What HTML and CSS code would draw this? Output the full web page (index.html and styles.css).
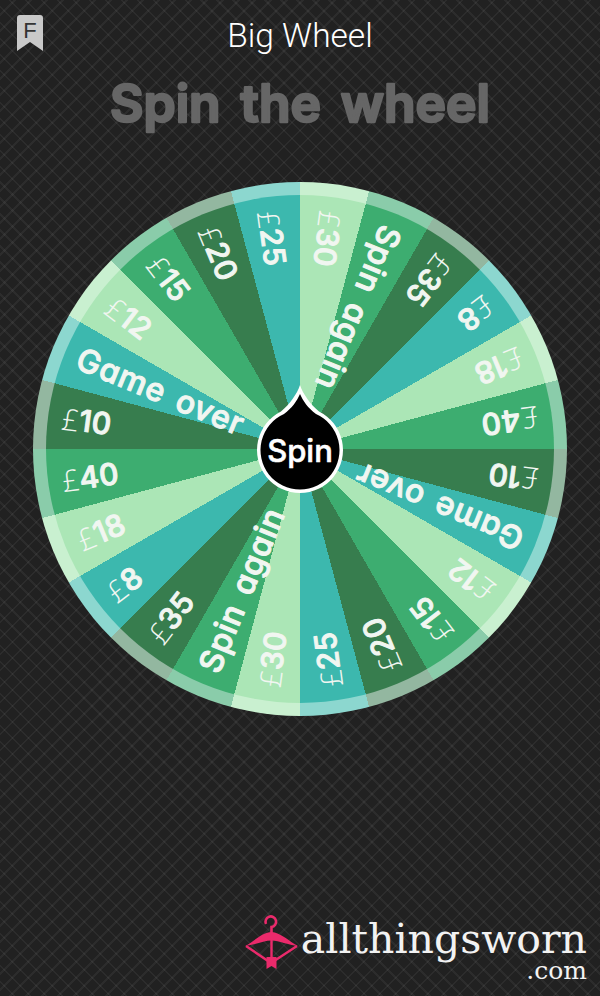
FILE: index.html
```html
<!DOCTYPE html>
<html lang="en">
<head>
    <meta charset="UTF-8">
    <meta name="viewport" content="width=device-width, initial-scale=1.0">
    <title>Big Wheel</title>
    <link rel="stylesheet" href="styles.css">
</head>
<body>
    <div class="page">
        <header class="topbar">
            <svg class="bookmark" viewBox="0 0 26 36" width="26" height="36">
                <path class="bookmark-shape" d="M3 0H23Q26 0 26 3V36L13 27L0 36V3Q0 0 3 0Z"/>
                <text class="bookmark-letter" x="13" y="23">F</text>
            </svg>
            <h1 class="title">Big Wheel</h1>
        </header>
        <h2 class="headline">
            <svg class="headline-svg" viewBox="0 0 600 80" width="600" height="80">
                <text x="300" y="50">Spin the wheel</text>
            </svg>
        </h2>

        <div class="wheel">
            <div class="wheel-face"></div>
            <svg class="wheel-labels" viewBox="-267 -267 534 534">
                <text transform="rotate(97.5) translate(-240 0)"><tspan class="pound">£</tspan>30</text>
                <text class="word" transform="rotate(112.5) translate(-240 0)">Spin again</text>
                <text transform="rotate(127.5) translate(-240 0)"><tspan class="pound">£</tspan>35</text>
                <text transform="rotate(142.5) translate(-240 0)"><tspan class="pound">£</tspan>8</text>
                <text transform="rotate(157.5) translate(-240 0)"><tspan class="pound">£</tspan>18</text>
                <text transform="rotate(172.5) translate(-240 0)"><tspan class="pound">£</tspan>40</text>
                <text transform="rotate(187.5) translate(-240 0)"><tspan class="pound">£</tspan>10</text>
                <text class="word" transform="rotate(202.5) translate(-240 0)">Game over</text>
                <text transform="rotate(217.5) translate(-240 0)"><tspan class="pound">£</tspan>12</text>
                <text transform="rotate(232.5) translate(-240 0)"><tspan class="pound">£</tspan>15</text>
                <text transform="rotate(247.5) translate(-240 0)"><tspan class="pound">£</tspan>20</text>
                <text transform="rotate(262.5) translate(-240 0)"><tspan class="pound">£</tspan>25</text>
                <text transform="rotate(277.5) translate(-240 0)"><tspan class="pound">£</tspan>30</text>
                <text class="word" transform="rotate(292.5) translate(-240 0)">Spin again</text>
                <text transform="rotate(307.5) translate(-240 0)"><tspan class="pound">£</tspan>35</text>
                <text transform="rotate(322.5) translate(-240 0)"><tspan class="pound">£</tspan>8</text>
                <text transform="rotate(337.5) translate(-240 0)"><tspan class="pound">£</tspan>18</text>
                <text transform="rotate(352.5) translate(-240 0)"><tspan class="pound">£</tspan>40</text>
                <text transform="rotate(7.5) translate(-240 0)"><tspan class="pound">£</tspan>10</text>
                <text class="word" transform="rotate(22.5) translate(-240 0)">Game over</text>
                <text transform="rotate(37.5) translate(-240 0)"><tspan class="pound">£</tspan>12</text>
                <text transform="rotate(52.5) translate(-240 0)"><tspan class="pound">£</tspan>15</text>
                <text transform="rotate(67.5) translate(-240 0)"><tspan class="pound">£</tspan>20</text>
                <text transform="rotate(82.5) translate(-240 0)"><tspan class="pound">£</tspan>25</text>

                <!-- spin button -->
                <g transform="translate(0 1)">
                    <path class="hub-edge" d="M0 -65C3 -56 10 -46 19 -38.500A43 43 0 1 1 -19 -38.500C-10 -46 -3 -56 0 -65Z"/>
                    <path class="hub" d="M0 -56C3 -49 8 -42 16 -36A39.500 39.500 0 1 1 -16 -36C-8 -42 -3 -49 0 -56Z"/>
                    <text class="hub-text" x="0" y="0">Spin</text>
                </g>
            </svg>
        </div>

        <footer class="logo">
            <svg class="logo-mark" viewBox="0 0 54 58" width="54" height="58">
                <path class="logo-line" d="M21 11A5.300 5.300 0 1 1 26.500 14V21"/>
                <path class="logo-bow" d="M0 33C8 29 18 19 26.500 19C35 19 45 29 53 33C43 32 34 27.500 26.500 27.500C19 27.500 10 32 0 33Z"/>
                <path class="logo-line thin" d="M1 33L26 50L52 33M26.500 25V50"/>
                <path class="logo-bow" d="M21.500 44L31.500 44L31.500 56L26.500 53L21.500 56Z"/>
            </svg>
            <div class="logo-text">
                <div class="logo-name">allthingsworn</div>
                <div class="logo-tld">.com</div>
            </div>
        </footer>
    </div>
</body>
</html>
```

FILE: styles.css
```css
* {
    box-sizing: border-box;
}

body {
    margin: 0;
    background-color: #212121;
    background-image:
        repeating-linear-gradient(45deg, transparent 0, transparent 9.5px, rgba(255,255,255,0.05) 9.5px, rgba(255,255,255,0.05) 11.3px),
        repeating-linear-gradient(-45deg, transparent 0, transparent 9.5px, rgba(255,255,255,0.05) 9.5px, rgba(255,255,255,0.05) 11.3px);
}

.page {
    width: 600px;
    height: 996px;
    display: flex;
    flex-direction: column;
    overflow: hidden;
}

.topbar {
    position: relative;
    height: 72px;
    padding-top: 16px;
    text-align: center;
}

/* sits over the corner of the bar, title stays centred */
.bookmark {
    position: absolute;
    top: 15px;
    left: 17px;
}

.bookmark-shape {
    fill: #c9c9c9;
}

.bookmark-letter {
    font-family: "Liberation Sans", sans-serif;
    font-size: 22px;
    fill: #333;
    text-anchor: middle;
}

.title {
    margin: 0;
    font-family: Roboto, sans-serif;
    font-size: 33.500px;
    font-weight: 300;
    line-height: 40px;
    color: #fff;
}

.headline {
    margin: 0;
    height: 110px;
}

.headline-svg {
    display: block;
}

.headline-svg text {
    font-family: Inter, sans-serif;
    font-feature-settings: "cv11";
    font-size: 51.500px;
    font-weight: 600;
    word-spacing: 7px;
    text-anchor: middle;
    fill: #666;
    stroke: #666;
    stroke-width: 2.500px;
    stroke-linejoin: round;
}

.wheel {
    position: relative;
    width: 534px;
    height: 534px;
    margin: 0 auto;
    padding: 13px;
    border-radius: 50%;
    background: conic-gradient(
        #c9f0d0 0 15deg, #8accaa 15deg 30deg, #93b7a0 30deg 45deg, #8cd7cf 45deg 60deg,
        #c9f0d0 60deg 75deg, #8accaa 75deg 90deg, #93b7a0 90deg 105deg, #8cd7cf 105deg 120deg,
        #c9f0d0 120deg 135deg, #8accaa 135deg 150deg, #93b7a0 150deg 165deg, #8cd7cf 165deg 180deg,
        #c9f0d0 180deg 195deg, #8accaa 195deg 210deg, #93b7a0 210deg 225deg, #8cd7cf 225deg 240deg,
        #c9f0d0 240deg 255deg, #8accaa 255deg 270deg, #93b7a0 270deg 285deg, #8cd7cf 285deg 300deg,
        #c9f0d0 300deg 315deg, #8accaa 315deg 330deg, #93b7a0 330deg 345deg, #8cd7cf 345deg 360deg);
}

.wheel-face {
    width: 100%;
    height: 100%;
    border-radius: 50%;
    background: conic-gradient(
        #abe6b6 0 15deg, #3dad70 15deg 30deg, #377d4e 30deg 45deg, #3cb8ae 45deg 60deg,
        #abe6b6 60deg 75deg, #3dad70 75deg 90deg, #377d4e 90deg 105deg, #3cb8ae 105deg 120deg,
        #abe6b6 120deg 135deg, #3dad70 135deg 150deg, #377d4e 150deg 165deg, #3cb8ae 165deg 180deg,
        #abe6b6 180deg 195deg, #3dad70 195deg 210deg, #377d4e 210deg 225deg, #3cb8ae 225deg 240deg,
        #abe6b6 240deg 255deg, #3dad70 255deg 270deg, #377d4e 270deg 285deg, #3cb8ae 285deg 300deg,
        #abe6b6 300deg 315deg, #3dad70 315deg 330deg, #377d4e 330deg 345deg, #3cb8ae 345deg 360deg);
}

.wheel-labels {
    position: absolute;
    top: 0;
    left: 0;
    width: 534px;
    height: 534px;
    overflow: visible;
}

.wheel-labels text {
    font-family: Inter, sans-serif;
    font-feature-settings: "cv11";
    font-size: 30px;
    font-weight: 500;
    letter-spacing: 0.3px;
    fill: #f1f6f1;
    stroke: #f1f6f1;
    stroke-width: 1px;
    stroke-linejoin: round;
    dominant-baseline: central;
}

.wheel-labels .word {
    font-size: 32px;
    letter-spacing: 0.8px;
    word-spacing: 4px;
}

.wheel-labels .pound {
    font-family: "Open Sans", sans-serif;
    font-weight: 300;
    stroke-width: 0;
}

.hub-edge {
    fill: #fff;
}

.hub {
    fill: #000;
}

.wheel-labels .hub-text {
    font-size: 31px;
    text-anchor: middle;
    fill: #fff;
    stroke: #fff;
    stroke-width: 0.6px;
    letter-spacing: 0;
}

.logo {
    margin-top: auto;
    padding: 0 13px 14px 0;
    display: flex;
    justify-content: flex-end;
    align-items: flex-start;
    gap: 2px;
}

.logo-line {
    fill: none;
    stroke: #ea2a6b;
    stroke-width: 2.600px;
}

.logo-line.thin {
    stroke-width: 2.400px;
}

.logo-bow {
    fill: #ea2a6b;
}

.logo-text {
    font-family: "DejaVu Serif", serif;
    color: #f2f2f2;
    text-align: right;
}

.logo-name {
    font-size: 41px;
    line-height: 42px;
    margin-top: 5px;
}

.logo-tld {
    font-size: 25px;
    line-height: 22px;
}
```
